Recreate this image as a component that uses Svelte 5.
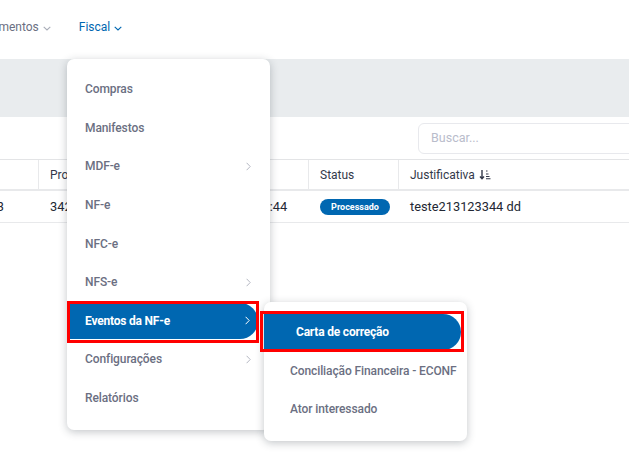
<script>
	const items = [
		{ label: "Compras" },
		{ label: "Manifestos" },
		{ label: "MDF-e", sub: true },
		{ label: "NF-e" },
		{ label: "NFC-e" },
		{ label: "NFS-e", sub: true },
		{ label: "Eventos da NF-e", sub: true, active: true },
		{ label: "Configurações", sub: true },
		{ label: "Relatórios" },
	];
	const subItems = ["Carta de correção", "Conciliação Financeira - ECONF", "Ator interessado"];
</script>

{#snippet chevronDown()}
	<svg class="caret" width="8" height="5" viewBox="0 0 8 5" fill="none">
		<path d="M0.7 0.8 L4 4 L7.3 0.8" stroke="currentColor" stroke-width="1.1" />
	</svg>
{/snippet}

<div class="page">
	<nav>
		<span class="nav-item">Lançamentos {@render chevronDown()}</span>
		<span class="nav-item current">Fiscal {@render chevronDown()}</span>
	</nav>
	<div class="band"></div>
	<div class="toolbar">
		<div class="search">Buscar...</div>
	</div>
	<div class="table">
		<div class="row head">
			<div class="cell"></div>
			<div class="cell">Protocolo</div>
			<div class="cell">Data</div>
			<div class="cell">Status</div>
			<div class="cell last sorted">
				Justificativa
				<svg width="12" height="11" viewBox="0 0 12 11" fill="none" stroke="#33394a">
					<path d="M3 1 V9.5 M1 7.5 L3 9.8 L5 7.5" stroke-width="1.4" />
					<path d="M7 2 H8.5 M7 5 H9.5 M7 7.5 H10.5 M7 9.8 H11.5" stroke-width="1.1" />
				</svg>
			</div>
		</div>
		<div class="row">
			<div class="cell id">1233</div>
			<div class="cell">342123123344</div>
			<div class="cell">12/03/2024 13:44</div>
			<div class="cell"><span class="badge">Processado</span></div>
			<div class="cell last">teste213123344 dd</div>
		</div>
	</div>

	<div class="menu main">
		{#each items as item}
			<div class="menu-item" class:active={item.active}>
				<span>{item.label}</span>
				{#if item.sub}
					<svg width="5" height="9" viewBox="0 0 5 9" fill="none">
						<path d="M0.6 0.8 L4.2 4.5 L0.6 8.2" stroke="currentColor" stroke-width="1" />
					</svg>
				{/if}
			</div>
		{/each}
	</div>

	<div class="menu submenu">
		{#each subItems as label, i}
			<div class="menu-item" class:active={i === 0}>{label}</div>
		{/each}
	</div>

	<div class="mark mark-a"></div>
	<div class="mark mark-b"></div>
</div>

<style>
	:global(body) {
		background: #fff;
	}
	.page {
		position: relative;
		width: 629px;
		height: 471px;
		overflow: hidden;
		font-family: Roboto, sans-serif;
		font-size: 12px;
		color: #33394a;
	}

	nav {
		display: flex;
		align-items: center;
		gap: 28px;
		height: 59px;
		margin-left: -34px;
		padding-bottom: 5px;
		box-sizing: border-box;
		color: #6b6f82;
	}
	.nav-item {
		display: flex;
		align-items: center;
		gap: 4px;
	}
	.caret {
		margin-top: 2px;
	}
	.nav-item .caret {
		color: #a9adb8;
	}
	.current,
	.nav-item.current .caret {
		color: #0067b1;
	}

	.band {
		height: 58px;
		background: #e9ecee;
	}
	.toolbar {
		display: flex;
		height: 42px;
		padding-left: 418px;
		align-items: center;
		box-sizing: border-box;
	}
	.search {
		flex: 0 0 260px;
		height: 31px;
		box-sizing: border-box;
		padding: 0 12px;
		line-height: 27px;
		margin-top: 1px;
		border: 1px solid #e8e9ed;
		border-radius: 6px;
		color: #b9bccb;
		font-size: 12.5px;
	}

	.table {
		border-top: 1px solid #e3e4e6;
	}
	.row {
		display: grid;
		grid-template-columns: 39px 134px 136px 90px 1fr;
		height: 32px;
		border-bottom: 1px solid #e8e9eb;
		box-sizing: border-box;
		font-size: 12.8px;
		color: #222733;
	}
	.row.head {
		height: 31px;
		border-bottom: 2px solid #e8e9eb;
		font-size: 12px;
		color: #33394a;
	}
	.cell {
		display: flex;
		align-items: center;
		gap: 5px;
		padding-left: 11px;
		white-space: nowrap;
		overflow: hidden;
	}
	.cell.sorted {
		gap: 4px;
	}
	.row.head .cell {
		border-right: 1px solid #e8e9eb;
	}
	.row.head .cell.last {
		border-right: 0;
	}
	.cell.id {
		justify-content: flex-end;
		padding: 0 35px 0 0;
	}
	.badge {
		display: block;
		width: 70px;
		height: 16px;
		line-height: 16px;
		border-radius: 8px;
		background: #0067b1;
		color: #fff;
		font-size: 9px;
		font-weight: 700;
		text-align: center;
	}

	.menu {
		position: absolute;
		background: #fff;
		border-radius: 7px;
		box-shadow: 0 2px 8px rgba(40, 50, 60, 0.28);
		font-weight: 500;
		letter-spacing: -0.1px;
		color: #6b6f82;
		box-sizing: border-box;
	}
	.main {
		left: 67px;
		top: 59px;
		width: 203px;
		height: 371px;
		padding-top: 10.6px;
	}
	.submenu {
		left: 264px;
		top: 302px;
		width: 203px;
		height: 139px;
		padding-top: 12px;
	}
	.menu-item {
		display: flex;
		align-items: center;
		justify-content: space-between;
		height: 38.7px;
		padding: 0 19px 0 18px;
		box-sizing: border-box;
		white-space: nowrap;
	}
	.menu-item svg {
		color: #b4b7c2;
	}
	.menu-item.active {
		height: 36px;
		margin: 1px 0 1px;
		background: #0067b1;
		color: #fff;
		font-weight: 700;
		letter-spacing: -0.2px;
		border-radius: 0 18px 18px 0;
	}
	.menu-item.active svg {
		color: #fff;
	}
	.main .menu-item.active {
		width: 191px;
		padding-right: 8px;
	}
	.submenu .menu-item {
		height: 38px;
		padding-left: 26px;
	}
	.submenu .menu-item.active {
		height: 36px;
		margin: 0 0 2px;
		width: 197px;
		padding-left: 32px;
	}

	.mark {
		position: absolute;
		border: 3px solid #f00;
		box-sizing: border-box;
	}
	.mark-a {
		left: 67px;
		top: 301px;
		width: 192px;
		height: 42px;
	}
	.mark-b {
		left: 260px;
		top: 311px;
		width: 204px;
		height: 41px;
	}
</style>
